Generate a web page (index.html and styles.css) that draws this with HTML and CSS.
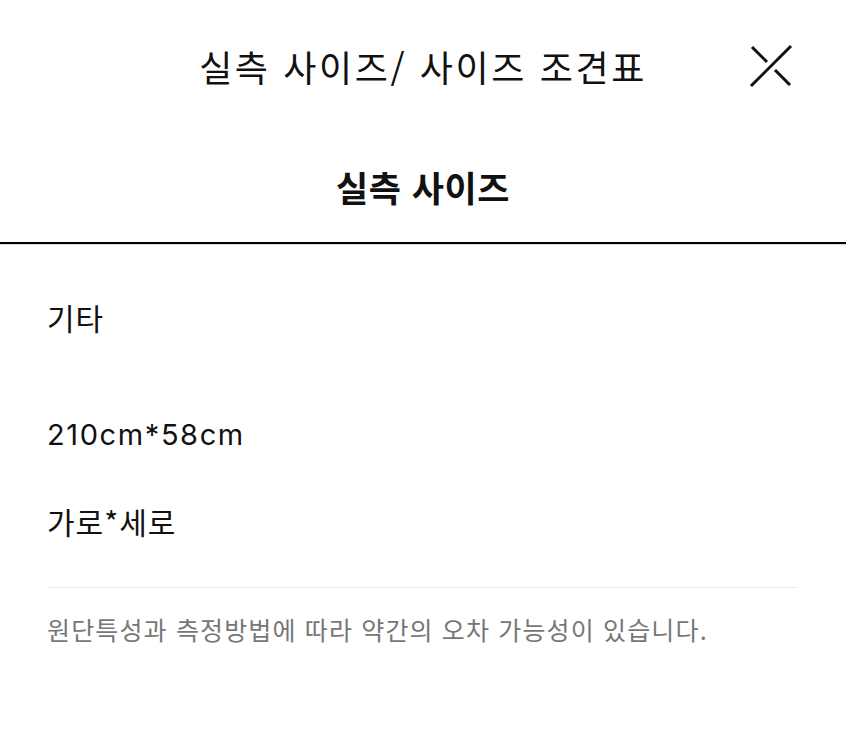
FILE: index.html
```html
<!DOCTYPE html>
<html lang="ko">
<head>
<meta charset="utf-8">
<link rel="stylesheet" href="styles.css">
</head>
<body>
<div class="modal">
  <header class="header">
    <h1 class="title">실측 사이즈/ 사이즈 조견표</h1>
    <button class="close" aria-label="닫기">
      <svg width="44" height="44" viewBox="0 0 44 44">
        <path d="M2 42 L42 2" stroke="#111" stroke-width="3" fill="none"/>
        <path d="M3 3 L18 18 M26 26 L41 41" stroke="#111" stroke-width="3" fill="none"/>
      </svg>
    </button>
  </header>
  <div class="tab">실측 사이즈</div>
  <div class="content">
    <p class="row first">기타</p>
    <p class="row size">210cm*58cm</p>
    <p class="row dims">가로*세로</p>
    <hr class="divider">
    <p class="note">원단특성과 측정방법에 따라 약간의 오차 가능성이 있습니다.</p>
  </div>
</div>
</body>
</html>
```

FILE: styles.css
```css
* { box-sizing: border-box; }
html, body { margin: 0; padding: 0; background: #fff; }
body {
  font-family: "Noto Sans CJK KR", "Noto Sans", sans-serif;
  color: #111;
}
.header {
  position: relative;
  height: 132px;
  display: flex;
  align-items: center;
  justify-content: center;
}
.title {
  margin: 0;
  font-size: 36px;
  font-weight: 400;
  line-height: 44px;
  letter-spacing: 2.6px;
  color: #111;
}
.close {
  position: absolute;
  right: 53px;
  top: 44px;
  width: 44px;
  height: 44px;
  padding: 0;
  border: 0;
  background: none;
}
.close svg { display: block; }
.tab {
  height: 112px;
  display: flex;
  align-items: center;
  justify-content: center;
  padding-bottom: 2px;
  font-size: 35px;
  font-weight: 700;
  letter-spacing: 0.5px;
  border-bottom: 2px solid #000;
  box-shadow: 0 1px 0 #ddd;
}
.content {
  padding: 0 48px 0 47px;
}
.row {
  margin: 0;
  font-size: 30px;
  line-height: 40px;
  letter-spacing: 1px;
  color: #111;
}
.size {
  font-family: "Inter", "Noto Sans CJK KR", sans-serif;
  font-size: 29px;
  letter-spacing: 1.6px;
}
.first { margin-top: 53px; }
.size { margin-top: 78px; }
.dims { margin-top: 46px; }
.divider {
  margin: 46px 0 0;
  border: 0;
  border-top: 1px solid #ececec;
  height: 0;
}
.note {
  margin: 24px 0 0;
  font-size: 25px;
  line-height: 34px;
  letter-spacing: 1.15px;
  color: #777;
}
```
